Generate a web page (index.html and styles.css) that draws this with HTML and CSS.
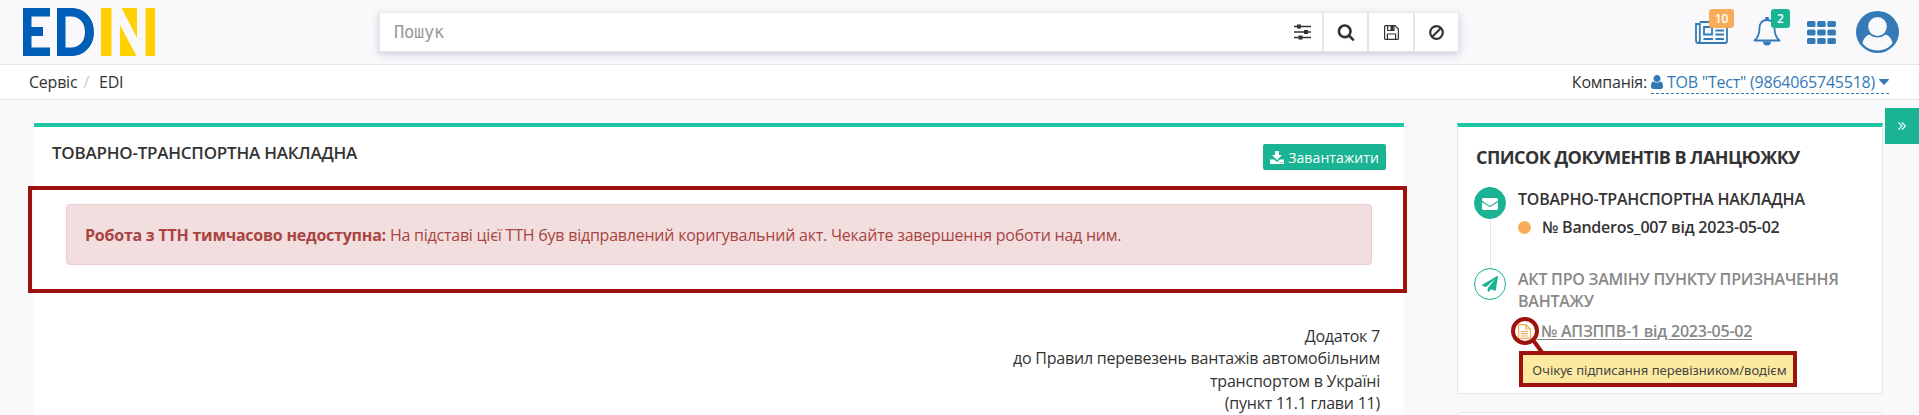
FILE: index.html
```html
<!DOCTYPE html>
<html lang="uk">
<head>
<meta charset="utf-8">
<title>EDIN</title>
<link rel="stylesheet" href="styles.css">
</head>
<body>
<header class="topbar">
  <svg class="logo" width="132" height="48" viewBox="0 0 132 48" role="img" aria-label="EDIN">
    <path fill="#005eb8" d="M0 0H27V8.500H8.500V19H20V28H8.500V39.500H27V48H0zM34 0H48C62 0 71 10.500 71 24S62 48 48 48H34zM42.500 8.500V39.500H48C57 39.500 62 32.500 62 24S57 8.500 48 8.500z" fill-rule="evenodd"/>
    <path fill="#ffd100" d="M78 0H88.500V48H78zM98.500 0H114V30zM97 17L113.500 48H97zM122.500 0H132V48H122.500z"/>
  </svg>
  <div class="search">
    <div class="search-field"><span>Пошук</span>
      <svg width="18" height="16" viewBox="0 0 18 16"><path d="M0 2.500H17M0 8H17M0 13.500H17" stroke="#333" stroke-width="1.600"/><path fill="#333" d="M3 .5h4v4H3zM10 6h4v4h-4zM4.500 11.500h4v4h-4z"/></svg>
    </div>
    <div class="search-btn"><svg width="18" height="18" viewBox="0 0 1792 1792"><path fill="#333" d="M1216 832q0-185-131.500-316.500t-316.500-131.500-316.500 131.500-131.500 316.500 131.500 316.500 316.500 131.500 316.500-131.500 131.500-316.500zm512 832q0 52-38 90t-90 38q-54 0-90-38l-343-342q-179 124-399 124-143 0-273.500-55.500t-225-150-150-225-55.500-273.500 55.500-273.500 150-225 225-150 273.500-55.500 273.500 55.500 225 150 150 225 55.500 273.500q0 220-124 399l343 343q37 37 37 90z"/></svg></div>
    <div class="search-btn"><svg width="15" height="15" viewBox="0 0 15 15" fill="none" stroke="#333" stroke-width="1.200"><path d="M.6 1.600Q.6.6 1.600.6H11L14.400 4V13.400Q14.400 14.400 13.400 14.400H1.600Q.6 14.400.6 13.400zM3.400 14V9H11.600V14M3.600 1V5.500H10V1"/><path fill="#333" stroke="none" d="M6.500 1h3v4h-3z"/></svg></div>
    <div class="search-btn"><svg width="15" height="15" viewBox="0 0 15 15" fill="none" stroke="#333" stroke-width="2.200"><circle cx="7.500" cy="7.500" r="6.300"/><path d="M3.200 11.800L11.800 3.200"/></svg></div>
  </div>
  <div class="tools">
    <div class="tool news">
      <svg width="33" height="23" viewBox="0 0 33 23" fill="none" stroke="#337ab7" stroke-width="1.800"><path d="M4.800 1H32V20Q32 22 30 22H3.200Q1 22 1 19.500V3H4.800V19.500Q4.800 22 3 22"/><path d="M9 6H17V13.500H9zM20.500 5.500H29M20.500 9.500H29M20.500 13.500H29M8.500 18H18M20.500 18H29"/></svg>
      <span class="badge badge-orange">10</span>
    </div>
    <div class="tool bell">
      <svg width="28" height="29" viewBox="0 0 28 29"><path fill="none" stroke="#337ab7" stroke-width="1.800" stroke-linejoin="round" d="M14 3C8.500 3 6.500 7 6.500 11C6.500 17.500 4.500 21 1.500 23.500H26.500C23.500 21 21.500 17.500 21.500 11C21.500 7 19.500 3 14 3z"/><path fill="#337ab7" d="M12.300 0h3.400v3.500h-3.400zM10 24.500h8a4 4 0 0 1-8 0z"/></svg>
      <span class="badge badge-green">2</span>
    </div>
    <svg class="grid-icon" width="29" height="23" viewBox="0 0 29 23" fill="#337ab7"><rect width="8.500" height="6" rx="1.500"/><rect x="10.200" width="8.500" height="6" rx="1.500"/><rect x="20.400" width="8.500" height="6" rx="1.500"/><rect y="8.500" width="8.500" height="6" rx="1.500"/><rect x="10.200" y="8.500" width="8.500" height="6" rx="1.500"/><rect x="20.400" y="8.500" width="8.500" height="6" rx="1.500"/><rect y="17" width="8.500" height="6" rx="1.500"/><rect x="10.200" y="17" width="8.500" height="6" rx="1.500"/><rect x="20.400" y="17" width="8.500" height="6" rx="1.500"/></svg>
    <svg class="avatar" width="43" height="42" viewBox="0 0 43 42"><ellipse cx="21.500" cy="21" rx="21.500" ry="21" fill="#337ab7"/><path fill="#f9f9fb" d="M13 23.500Q7.500 26 6.500 32.500Q12.500 39.500 21.500 39.500T36.500 32.500Q35.500 26 30 23.500Q26 26.500 21.500 26.500T13 23.500z"/><ellipse cx="21.500" cy="15.500" rx="9.300" ry="9.500" fill="#f9f9fb"/></svg>
  </div>
</header>
<nav class="crumbs">
  <div class="trail"><span>Сервіс</span><span class="slash">/</span><span>EDI</span></div>
  <div class="company"><span>Компанія:</span>
    <a class="company-link"><svg width="12" height="14" viewBox="256 128 1280 1536" preserveAspectRatio="none"><path fill="#337ab7" d="M1536 1399q0 109-62.500 187t-150.500 78h-854q-88 0-150.500-78t-62.500-187q0-85 8.500-160.500t31.500-152 58.500-131 94-89 134.500-34.500q131 128 313 128t313-128q76 0 134.500 34.500t94 89 58.500 131 31.500 152 8.500 160.500zm-256-887q0 159-112.500 271.500t-271.500 112.500-271.500-112.500-112.500-271.500 112.500-271.500 271.500-112.500 271.500 112.500 112.500 271.500z"/></svg><span>ТОВ "Тест" (9864065745518)</span><svg width="10" height="6" viewBox="0 0 10 6"><path fill="#337ab7" d="M.5 0h9q.8.3.2 1L5.600 5.500q-.6.500-1.200 0L.3 1Q-.3.300.5 0z"/></svg></a>
  </div>
</nav>
<main class="content">
  <section class="panel">
    <div class="panel-head">
      <h1 class="panel-title">ТОВАРНО-ТРАНСПОРТНА НАКЛАДНА</h1>
      <button class="download"><svg width="14" height="13" viewBox="0 0 14 13"><path fill="#fff" d="M5 0h4v4h3L7 9 2 4h3zM0 8.500h4L7 11l3-2.500h4V13H0z"/><path fill="#1ab394" d="M9.500 11h1v1h-1zM11.700 11h1v1h-1z"/></svg>Завантажити</button>
    </div>
    <div class="callout">
      <div class="alert"><b>Робота з ТТН тимчасово недоступна:</b> На підставі цієї ТТН був відправлений коригувальний акт. Чекайте завершення роботи над ним.</div>
    </div>
    <div class="appendix">Додаток 7<br>до Правил перевезень вантажів автомобільним<br>транспортом в Україні<br>(пункт 11.1 глави 11)</div>
  </section>
  <aside class="side">
    <div class="chain">
      <h2 class="chain-title">СПИСОК ДОКУМЕНТІВ В ЛАНЦЮЖКУ</h2>
      <div class="step">
        <div class="rail">
          <span class="node node-full"><svg width="16" height="13" viewBox="0 128 1792 1536" preserveAspectRatio="none"><path fill="#fff" d="M1792 710v794q0 66-47 113t-113 47h-1472q-66 0-113-47t-47-113v-794q44 49 101 87 362 246 497 345 57 42 92.500 65.500t94.500 48 110 24.500h2q51 0 110-24.500t94.500-48 92.500-65.500q170-123 498-345 57-39 100-87zm0-294q0 79-49 151t-122 123q-376 261-468 325-10 7-42.500 31t-54 38.500-52 32.500-57.500 27-50 9h-2q-23 0-50-9t-57.500-27-52-32.500-54-38.500-42.500-31q-91-64-262-182.500t-205-142.500q-62-42-117-115.500t-55-136.500q0-78 41.500-130t118.500-52h1472q65 0 112.500 47t47.500 113z"/></svg></span>
          <span class="line"></span>
        </div>
        <div class="step-body lower">
          <div class="step-title">ТОВАРНО-ТРАНСПОРТНА НАКЛАДНА</div>
          <div class="doc"><span class="dot"></span><span>№ Banderos_007 від 2023-05-02</span></div>
        </div>
      </div>
      <div class="step muted">
        <div class="rail">
          <span class="node"><svg width="16" height="16" viewBox="0 0 1792 1792"><path fill="#1ab394" d="M1764 11q33 24 27 64l-256 1536q-5 29-32 45-14 8-31 8-11 0-24-5l-453-185-242 295q-18 23-49 23-13 0-22-4-19-7-30.500-23.500t-11.500-36.500v-349l864-1059-1069 925-395-162q-37-14-40-55-2-40 32-59l1664-960q15-9 32-9 20 0 36 11z"/></svg></span>
        </div>
        <div class="step-body">
          <div class="step-title">АКТ ПРО ЗАМІНУ ПУНКТУ ПРИЗНАЧЕННЯ ВАНТАЖУ</div>
          <div class="doc linked">
            <svg width="13" height="15" viewBox="0 0 13 15" fill="none" stroke="#f8ac59" stroke-width="1.200"><path d="M.6.6H8L12.400 5V14.400H.6zM8 .6V5H12.400M3 7.500H10M3 9.700H10M3 12H10"/></svg>
            <span class="doc-name">&nbsp;№ АПЗППВ-1 від 2023-05-02</span>
            <svg class="marker" width="36" height="38" viewBox="0 0 36 38" fill="none" stroke="#9e120d" stroke-width="4"><circle cx="14" cy="14" r="12"/><path d="M22 23L31.500 36"/></svg>
            <div class="tip">Очікує підписання перевізником/водієм</div>
          </div>
        </div>
      </div>
    </div>
    <div class="next-card"></div>
  </aside>
  <div class="toggle"><svg width="8" height="8" viewBox="0 0 8 8" fill="none" stroke="#fff" stroke-width="1.100"><path d="M.5.3L4 4 .5 7.700M4 .3L7.500 4 4 7.700"/></svg></div>
</main>
</body>
</html>
```

FILE: styles.css
```css
* { box-sizing: border-box; }
body {
  margin: 0;
  height: 415px;
  overflow: hidden;
  background: #f9f9fb;
  color: #333;
  font: 16px/22.400px "Open Sans", "Noto Sans", sans-serif;
  letter-spacing: -.23px;
}
svg { flex: none; display: block; }
.topbar {
  display: flex;
  align-items: flex-start;
  height: 65px;
  padding: 8px 20px 0 23px;
  border-bottom: 1px solid #e4e7ea;
}
.search {
  display: flex;
  width: 1080px;
  height: 39px;
  margin: 5px 0 0 224px;
  background: #fff;
  border: solid #e5e6e7;
  border-width: 0 1px 1px;
  box-shadow: 0 2px 8px rgba(60, 60, 110, .25);
}
.search-field {
  display: flex;
  flex: 1;
  align-items: center;
  justify-content: space-between;
  padding: 0 10px 0 14px;
  color: #999;
  font: 17px "DejaVu Sans Mono", monospace;
}
.search-btn {
  display: flex;
  align-items: center;
  justify-content: center;
  width: 45.300px;
  border-left: 2px solid #e5e6e7;
}
.tools { display: flex; margin-left: auto; }
.tool { position: relative; }
.news { width: 58px; padding-top: 13px; }
.bell { width: 54px; padding-top: 9px; }
.badge {
  position: absolute;
  height: 19px;
  border-radius: 3px;
  color: #fff;
  font: 600 12px/19px "Open Sans", sans-serif;
  letter-spacing: 0;
  text-align: center;
}
.badge-orange { left: 14px; top: 1px; width: 25px; background: #f8ac59; }
.badge-green { left: 18px; top: 1px; width: 19px; background: #1ab394; }
.grid-icon { margin: 13px 20px 0 0; }
.avatar { margin: 3px 0 0; }
.crumbs {
  display: flex;
  justify-content: space-between;
  height: 35px;
  padding: 6px 30px 0 29px;
  background: #fff;
  border-bottom: 1px solid #e4e7ea;
}
.trail { display: flex; }
.slash { margin: 0 10px 0 6px; color: #ccc; }
.company { display: flex; gap: 4px; }
.company-link {
  display: flex;
  align-items: center;
  gap: 4px;
  height: 23px;
  color: #337ab7;
  border-bottom: 1px dashed #337ab7;
}
.content {
  display: flex;
  align-items: flex-start;
  height: 315px;
  padding: 8px 0 0 34px;
  overflow: hidden;
}
.panel {
  width: 1370px;
  height: 292px;
  margin-top: 15px;
  background: #fff;
  border-top: 4px solid #1ec6a5;
}
.panel-head {
  display: flex;
  justify-content: space-between;
  height: 59px;
  padding: 15px 18px 0;
}
.panel-title { margin: 0; font-size: 17px; line-height: 22px; font-weight: 600; }
.download {
  display: flex;
  align-items: center;
  gap: 4px;
  height: 26px;
  margin-top: 2px;
  padding: 0 7px;
  border: 0;
  border-radius: 2px;
  background: #1ab394;
  color: #fff;
  font: 14px "Open Sans", sans-serif;
  letter-spacing: .1px;
}
.callout {
  height: 107px;
  margin: 0 -3px 0 -6px;
  padding: 14px 31px 0 34px;
  border: 4px solid #9e120d;
}
.alert {
  height: 61px;
  padding: 19px 18px;
  border: 1px solid #ebccd1;
  border-radius: 4px;
  background: #f2dede;
  color: #a94442;
}
.appendix { padding: 32px 24px 0 0; text-align: right; }
.side { width: 426px; margin: 15px 0 0 53px; }
.chain {
  height: 271px;
  padding: 18px 17px 0 16px;
  background: #fff;
  border: 1px solid #e7e7e9;
  border-top: 4px solid #1ec6a5;
}
.chain-title {
  margin: 0 0 18px 2px;
  font-size: 18px;
  line-height: 24px;
  font-weight: 700;
  letter-spacing: -.55px;
}
.step { display: flex; gap: 12px; height: 81px; font-weight: 600; }
.rail { display: flex; flex-direction: column; align-items: center; width: 32px; }
.node {
  display: flex;
  flex: none;
  align-items: center;
  justify-content: center;
  width: 32px;
  height: 32px;
  border: 1px solid #1ab394;
  border-radius: 50%;
}
.node-full { background: #1ab394; }
.line { width: 1px; flex: 1; background: #e7e7e9; }
.step-body { flex: 1; }
.lower { padding-top: 1px; }
.doc { display: flex; align-items: center; margin-top: 6px; }
.dot { width: 13px; height: 13px; margin-right: 11px; border-radius: 50%; background: #f8ac59; }
.muted { color: #888; }
.linked { position: relative; margin-top: 7px; }
.doc-name {
  margin-left: 6px;
  text-decoration: underline;
  text-decoration-thickness: 1px;
  text-underline-offset: 2px;
}
.marker { position: absolute; left: -7px; top: -3px; }
.tip {
  position: absolute;
  left: 1px;
  top: 31px;
  width: 278px;
  height: 36px;
  padding-left: 3px;
  border: 4px solid #9e120d;
  background: #fde9a0;
  color: #444;
  font: 13px/31px "Noto Sans", sans-serif;
  letter-spacing: 0;
  text-align: center;
  white-space: nowrap;
}
.next-card { height: 6px; margin-top: 18px; background: #fff; border: 1px solid #e7e7e9; border-bottom: 0; border-radius: 4px 4px 0 0; }
.toggle {
  display: flex;
  align-items: center;
  justify-content: center;
  width: 34px;
  height: 36px;
  margin-left: 2px;
  background: #1ab394;
}
```
